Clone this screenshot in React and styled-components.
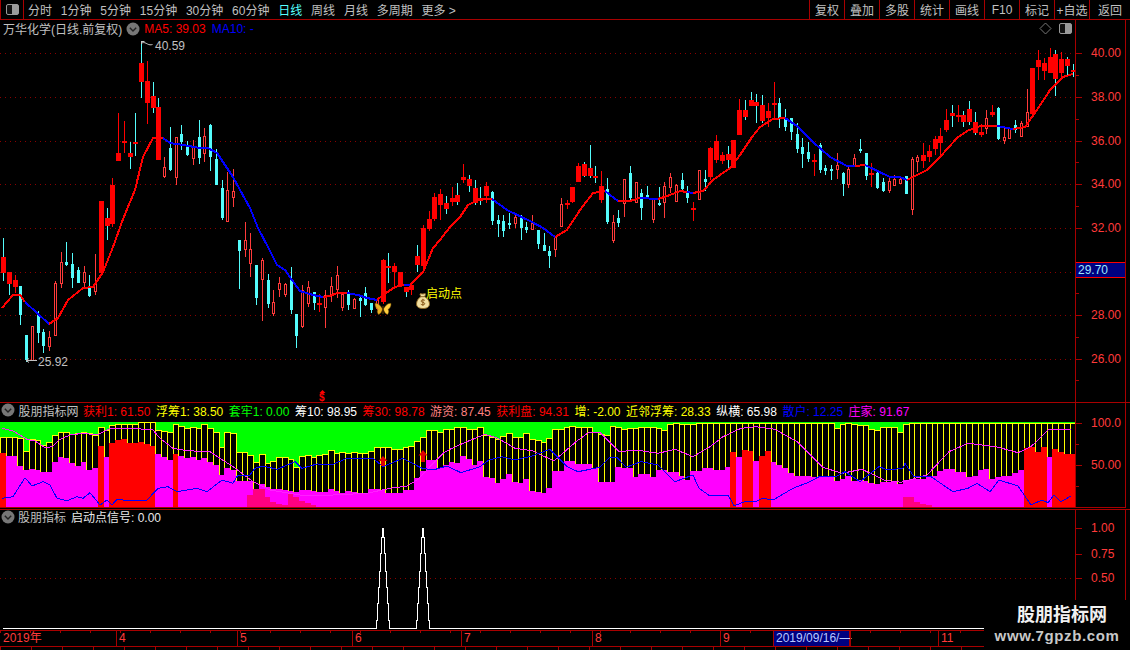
import React from "react";
import styled, { createGlobalStyle } from "styled-components";

const BORDER = "#a80000";
const FONT = `"Liberation Sans", "Noto Sans CJK SC", sans-serif`;

const GlobalStyle = createGlobalStyle`
  html, body { margin: 0; padding: 0; background: #000; }
`;

// type, body top, body bottom, wick top, wick bottom (page pixels)
// r = red, h = hollow red, c = cyan, m = red body with cyan wick
const candles = [
  ["m",257,273,238,281],["m",272,284,272,295],["r",280,287,275,293],["c",286,315,286,325],["c",335,360,335,362],
  ["h",326,360,326,360],["c",314,333,311,343],["c",332,346,329,353],["h",337,346,331,351],["h",283,335,281,335],
  ["h",262,283,252,288],["c",262,265,242,266],["c",264,278,253,288],["c",270,283,267,283],["h",272,282,266,287],
  ["c",288,296,275,297],["h",283,291,254,295],["r",201,273,201,276],["m",218,226,208,240],["r",185,224,178,227],
  ["r",153,161,113,161],["r",141,143,121,153],["m",153,157,142,169],["m",142,144,113,156],["m",63,82,41,98],
  ["r",81,103,61,124],["m",96,108,82,113],["m",107,160,98,160],["h",167,176,157,178],["c",148,170,127,171],
  ["h",137,177,137,185],["c",134,142,125,150],["c",146,155,141,156],["h",147,158,140,165],["c",137,158,120,164],
  ["h",136,153,128,162],["c",125,157,124,171],["c",159,185,149,185],["c",188,218,180,220],["h",190,221,172,221],
  ["h",191,197,169,207],["c",240,251,240,289],["h",240,249,222,257],["h",249,263,233,277],["c",265,298,265,305],
  ["h",260,279,258,321],["c",280,304,274,308],["h",302,313,290,316],["h",283,289,277,297],["h",284,294,283,297],
  ["c",279,310,267,314],["c",314,336,314,348],["h",290,326,285,328],["h",287,303,281,307],["c",292,303,292,310],
  ["r",303,305,294,312],["h",295,307,290,328],["h",286,295,277,302],["h",275,289,266,298],["h",294,307,292,311],
  ["c",294,305,290,310],["h",299,308,298,309],["c",298,301,297,317],["c",293,305,287,306],["c",303,310,303,313],
  ["h",300,308,298,310],["r",260,302,259,304],["m",266,268,253,283],["r",266,272,263,288],["r",272,285,272,287],
  ["m",287,292,287,297],["r",285,290,285,295],["m",256,265,245,272],["r",228,266,225,268],["r",219,229,211,231],
  ["r",197,219,193,221],["r",194,205,189,220],["m",203,209,196,214],["r",198,202,187,206],["m",195,202,183,205],
  ["r",177,180,164,183],["m",179,186,175,192],["m",188,203,180,205],["m",198,201,187,205],["r",186,196,182,203],
  ["c",192,221,191,225],["c",220,224,215,237],["c",221,231,215,237],["c",223,225,213,229],["h",217,223,213,228],
  ["c",217,228,215,240],["c",227,230,222,233],["h",223,229,215,230],["c",230,244,230,249],["c",245,251,233,251],
  ["c",251,256,246,268],["h",236,249,236,257],["h",204,226,198,226],["r",203,205,200,209],["r",187,202,187,203],
  ["r",166,182,163,182],["m",164,176,162,177],["m",168,176,145,178],["m",176,178,166,183],["r",186,200,171,203],
  ["c",189,222,178,224],["h",222,240,215,243],["c",218,223,210,227],["h",179,203,179,217],["c",173,198,166,200],
  ["h",182,202,182,203],["c",193,208,189,220],["c",195,199,186,199],["h",199,219,199,223],["c",203,205,187,206],
  ["h",186,202,182,218],["h",177,187,173,193],["h",185,201,184,201],["c",180,189,173,192],["c",192,198,186,203],
  ["r",208,209,202,221],["h",170,199,170,200],["c",179,182,170,191],["r",148,177,147,180],["r",141,160,135,163],
  ["r",155,161,152,164],["m",154,160,146,168],["r",140,168,140,168],["r",110,135,99,135],["m",110,117,100,120],
  ["m",100,106,92,106],["m",102,106,94,123],["m",105,121,95,123],["r",111,118,103,127],["r",103,105,82,118],
  ["c",103,118,98,128],["c",119,127,109,131],["c",118,132,118,140],["c",134,149,123,153],["c",147,154,138,168],
  ["c",152,159,142,162],["r",160,162,154,176],["c",145,170,143,173],["c",168,171,165,175],["c",169,171,165,180],
  ["h",165,169,153,179],["c",173,184,172,196],["h",169,184,167,188],["h",158,165,154,167],["c",149,150,139,153],
  ["c",153,176,153,180],["r",173,175,163,187],["c",173,188,172,189],["c",182,191,178,192],["h",181,190,177,193],
  ["h",179,185,175,186],["h",179,183,176,184],["c",176,194,176,194],["h",159,209,157,215],["h",157,161,155,172],
  ["r",155,161,143,168],["r",151,157,145,162],["r",139,149,136,155],["r",136,143,128,155],["r",120,130,109,132],
  ["m",113,116,105,127],["r",115,117,105,122],["m",115,122,111,127],["m",109,122,101,125],["m",122,133,112,135],
  ["r",132,135,124,137],["h",118,128,110,134],["r",112,115,105,117],["c",108,139,107,140],["h",137,140,128,144],
  ["h",128,138,127,139],["c",125,130,120,133],["h",123,136,121,137],["h",112,126,89,126],["r",68,114,68,115],
  ["r",60,67,50,80],["r",63,71,58,80],["r",57,73,48,73],["m",54,79,50,96],["r",59,73,52,78],["m",59,66,57,77],
  ["m",70,72,64,77],
];

// red/blue trend line of the price pane
const maSegments = [
  ["#ff0000", [[2,308],[7,302],[13,295],[20,295],[25,302]]],
  ["#0000ff", [[25,302],[37,313],[49,324]]],
  ["#ff0000", [[49,324],[58,318],[68,300],[83,288],[93,287],[103,272],[113,247],[123,219],[135,190],[143,157],[153,138],[163,138]]],
  ["#0000ff", [[163,138],[170,143],[183,145],[200,148],[208,148],[217,153],[233,177],[240,190],[250,208],[258,228],[268,247],[277,265],[285,270],[292,280],[300,291],[313,295],[323,297]]],
  ["#ff0000", [[323,297],[330,296],[337,293],[347,293]]],
  ["#0000ff", [[347,293],[358,295],[367,298],[377,300]]],
  ["#ff0000", [[377,300],[383,295],[395,287],[404,285]]],
  ["#0000ff", [[404,285],[410,285]]],
  ["#ff0000", [[410,285],[423,272],[433,248],[440,240],[450,227],[460,217],[468,205],[480,199],[492,199]]],
  ["#0000ff", [[492,199],[507,210],[532,222],[543,228],[555,237]]],
  ["#ff0000", [[555,237],[567,230],[580,210],[593,193],[605,191]]],
  ["#0000ff", [[605,191],[618,201]]],
  ["#ff0000", [[618,201],[630,201],[640,198]]],
  ["#0000ff", [[640,198],[658,199]]],
  ["#ff0000", [[658,199],[670,195],[680,191],[687,192]]],
  ["#0000ff", [[687,192],[693,193]]],
  ["#ff0000", [[693,193],[703,191],[713,180],[730,168],[740,155],[752,137],[760,127],[773,119],[785,118]]],
  ["#0000ff", [[785,118],[797,126],[813,142],[830,157],[847,166],[855,166]]],
  ["#ff0000", [[855,166],[865,165]]],
  ["#0000ff", [[865,165],[890,177],[900,177],[907,180]]],
  ["#ff0000", [[907,180],[927,170],[940,157],[957,138],[967,131],[980,126],[997,126]]],
  ["#0000ff", [[997,126],[1013,129]]],
  ["#ff0000", [[1013,129],[1025,127],[1037,110],[1050,90],[1063,77],[1073,74]]],
];

const gridY = [53, 97, 141, 184, 228, 272, 315, 359];

// bar tops and magenta tops read off at 3x, converted with toY below
const barTop = [
  170,170,170,175,213,178,181,195,185,165,157,157,162,160,157,160,165,142,150,135,
  133,133,133,133,127,127,127,150,152,156,133,137,145,140,145,133,145,155,200,157,
  160,217,217,225,247,222,248,242,230,230,238,262,228,225,230,226,223,211,220,217,
  218,217,220,219,214,200,200,202,208,208,202,197,182,170,150,150,157,147,148,142,
  142,148,148,142,165,172,178,168,160,172,170,160,178,180,185,175,148,148,142,137,
  140,140,140,155,162,165,138,140,148,143,143,140,140,140,143,150,132,130,133,133,
  133,130,130,128,128,128,128,128,128,128,128,128,128,128,128,128,128,128,128,128,
  128,128,128,128,128,145,132,130,133,135,135,148,150,140,140,140,155,133,128,128,
  128,128,128,128,128,128,128,128,128,128,128,128,128,128,128,128,128,128,128,128,
  128,128,128,128,128,128,128,
];
const barMid = [
  218,228,228,258,270,267,270,275,275,245,232,234,250,258,245,270,264,198,232,190,
  180,177,190,188,186,192,198,222,230,240,222,227,233,231,240,233,245,255,285,264,
  270,303,303,303,328,312,322,326,326,330,333,337,330,330,332,336,335,327,332,338,
  332,336,341,342,328,327,330,338,338,338,330,330,293,273,240,240,264,256,245,248,
  228,237,255,243,291,295,310,297,282,305,310,297,333,335,338,323,272,272,243,243,
  252,252,252,265,305,305,305,262,265,265,290,283,283,290,270,270,275,275,287,300,
  272,272,265,265,270,270,260,215,230,210,212,243,228,213,245,255,265,280,288,288,
  288,290,290,290,290,302,297,287,302,300,303,310,312,305,305,305,312,300,296,296,
  296,287,287,272,267,267,277,277,290,288,270,268,297,290,288,288,278,270,205,202,
  215,202,230,207,215,222,222,
];
const redBars = new Set([0,17,19,20,21,22,23,24,25,26,30,127,129,130,132,133,178,179,180,181,183,184,185,186]);
const pinkBars = { 43:345,44:328,45:328,46:352,47:365,48:372,49:375,50:342,51:350,52:362,53:370,54:376,157:352,158:352,159:365,160:372,161:375 };

const purpleLine = [
  [2,145],[13,153],[27,178],[35,183],[45,203],[52,200],[60,178],[70,165],[83,160],[97,165],[110,145],[133,145],[153,150],[160,175],
  [173,205],[187,212],[210,215],[220,235],[233,260],[253,305],[270,330],[300,345],[333,345],[367,340],[390,325],[407,318],[417,300],
  [430,260],[443,220],[450,208],[463,190],[485,163],[498,175],[515,205],[532,212],[554,243],[576,185],[589,157],[600,158],[619,215],
  [636,210],[658,220],[675,208],[693,230],[710,200],[723,170],[741,145],[756,140],[775,148],[797,185],[823,262],[842,280],[862,268],
  [884,300],[901,307],[927,285],[949,215],[968,190],[996,200],[1018,218],[1031,200],[1048,150],[1071,148],
];
const blueLine = [
  [2,355],[13,350],[25,293],[32,318],[43,305],[50,315],[57,355],[67,362],[77,350],[83,355],[90,338],[100,375],[107,360],[112,375],
  [117,358],[128,362],[147,360],[158,325],[168,320],[177,335],[197,325],[207,335],[222,300],[233,310],[238,285],[250,285],[255,265],
  [263,258],[277,268],[295,245],[302,265],[317,252],[333,253],[347,235],[373,235],[383,260],[403,235],[422,265],[433,270],[447,258],
  [461,278],[480,260],[489,240],[502,230],[515,240],[532,228],[550,208],[567,260],[578,275],[600,262],[610,232],[617,232],[626,262],
  [641,245],[658,255],[675,305],[693,285],[699,325],[710,348],[728,345],[734,377],[745,365],[756,365],[762,355],[773,360],[793,325],
  [810,305],[819,290],[836,290],[845,275],[860,305],[879,260],[888,270],[903,265],[905,250],[914,290],[931,290],[953,335],[968,325],
  [977,310],[990,335],[999,300],[1018,318],[1031,375],[1042,360],[1048,368],[1054,345],[1061,365],[1071,348],
];

const toolbarItems = [
  ["分时"],["1分钟"],["5分钟"],["15分钟"],["30分钟"],["60分钟"],["日线", true],["周线"],["月线"],["多周期"],["更多 >"],
];
const toolButtons = ["复权", "叠加", "多股", "统计", "画线", "F10", "标记", "+自选", "返回"];

const indicatorLegend = [
  ["获利1: 61.50", "#ff0000"],
  ["浮筹1: 38.50", "#ffff00"],
  ["套牢1: 0.00", "#00ff00"],
  ["筹10: 98.95", "#ffffff"],
  ["筹30: 98.78", "#ff0000"],
  ["游资: 87.45", "#ff8080"],
  ["获利盘: 94.31", "#ff0000"],
  ["增: -2.00", "#ffff00"],
  ["近邻浮筹: 28.33", "#ffff00"],
  ["纵横: 65.98", "#ffffff"],
  ["散户: 12.25", "#0000ff"],
  ["庄家: 91.67", "#ff00ff"],
];

const dateCells = [
  [116, "2019年"],[121, "4"],[115, "5"],[109, "6"],[131, "7"],[128, "8"],[53, "9"],[77, "2019/09/16/—", true],[88, ""],[47, "11"],
];

const Screen = styled.div`
  position: relative;
  width: 1130px;
  height: 650px;
  overflow: hidden;
  background: #000;
  font-family: ${FONT};
  font-size: 12px;
  color: #c0c0c0;
  display: flex;
  flex-direction: column;
`;

const Toolbar = styled.div`
  height: 20px;
  box-sizing: border-box;
  border-bottom: 1px solid ${BORDER};
  display: flex;
  align-items: stretch;
`;

const ToggleCell = styled.div`
  width: 24px;
  box-sizing: border-box;
  border-right: 1px solid ${BORDER};
  border-left: 1px solid ${BORDER};
  display: flex;
  align-items: center;
  justify-content: center;
`;

const PeriodList = styled.div`
  display: flex;
  align-items: center;
  gap: 8.8px;
  padding-left: 4px;
`;

const PeriodItem = styled.span`
  color: ${(props) => (props.$active ? "#55ffff" : "#c0c0c0")};
  white-space: nowrap;
`;

const ToolGroup = styled.div`
  margin-left: auto;
  display: flex;
`;

const ToolButton = styled.div`
  width: ${(props) => (props.$last ? "41px" : "35px")};
  box-sizing: border-box;
  border-left: 1px solid ${BORDER};
  display: flex;
  align-items: center;
  justify-content: center;
  white-space: nowrap;
  color: #c0c0c0;
`;

const Pane = styled.section`
  height: ${(props) => props.$height}px;
  box-sizing: border-box;
  display: flex;
  flex: none;
  margin-top: ${(props) => props.$gap || 0}px;
  border-top: ${(props) => (props.$ruled ? `1px solid ${BORDER}` : "none")};
`;

const PlotColumn = styled.div`
  width: 1075px;
  display: flex;
  flex-direction: column;
`;

const Legend = styled.div`
  height: ${(props) => props.$height}px;
  box-sizing: border-box;
  flex: none;
  display: flex;
  align-items: center;
  gap: ${(props) => props.$gap}px;
  padding-left: ${(props) => props.$inset}px;
  padding-bottom: ${(props) => props.$lift || 0}px;
  white-space: nowrap;
`;

const LegendText = styled.span`
  color: ${(props) => props.$color || "#c0c0c0"};
`;

const LegendTools = styled.div`
  margin-left: auto;
  display: flex;
  align-items: center;
  gap: 7px;
  padding-right: 3px;
`;

const Chart = styled.svg`
  display: block;
  flex: none;
  background: #000;
`;

const ChartNote = styled.text`
  font-family: ${FONT};
  font-size: 12px;
  fill: ${(props) => props.$fill};
`;

const AxisColumn = styled.div`
  position: relative;
  width: 51px;
  flex: none;
  box-sizing: border-box;
  border-left: 1px solid ${BORDER};
  border-right: 1px solid ${BORDER};
  border-bottom: ${(props) => (props.$ruled ? `1px solid ${BORDER}` : "none")};
`;

const AxisLabel = styled.div`
  position: absolute;
  left: 0;
  right: 0;
  top: ${(props) => props.$y}px;
  height: 14px;
  margin-top: -7px;
  line-height: 14px;
  padding-left: 15px;
  color: #ff3a3a;
  &::before {
    content: "";
    position: absolute;
    left: 0;
    top: 7px;
    width: 6px;
    height: 1px;
    background: ${BORDER};
  }
`;

const AxisTick = styled.div`
  position: absolute;
  left: 0;
  top: ${(props) => props.$y}px;
  width: 3px;
  height: 1px;
  background: ${BORDER};
`;

const PriceTag = styled.div`
  position: absolute;
  left: 0;
  right: 0;
  top: ${(props) => props.$y}px;
  height: 16px;
  box-sizing: border-box;
  border-top: 1px solid #ff0000;
  border-bottom: 1px solid #ff0000;
  background: #000080;
  color: #9fe8ff;
  padding-left: 2px;
  line-height: 14px;
`;

const BottomRule = styled.div`
  height: 1px;
  flex: none;
  background: ${BORDER};
`;

const DateAxis = styled.div`
  height: 17px;
  flex: none;
  box-sizing: border-box;
  display: flex;
  border-top: 1px solid ${BORDER};
  border-bottom: 1px solid ${BORDER};
  background-image: repeating-linear-gradient(to right, ${BORDER} 0 1px, transparent 1px 30px);
  background-size: 100% 2px;
  background-repeat: no-repeat;
`;

const DateCell = styled.div`
  width: ${(props) => props.$width}px;
  flex: none;
  box-sizing: border-box;
  border-left: ${(props) => (props.$first ? "none" : `1px solid ${BORDER}`)};
  border-right: ${(props) => (props.$active ? `1px solid ${BORDER}` : "none")};
  background: ${(props) => (props.$active ? "#000080" : "transparent")};
  color: ${(props) => (props.$active ? "#b8c8ff" : "#ff3a3a")};
  padding-left: ${(props) => (props.$first ? 3 : 2)}px;
  line-height: 15px;
  white-space: nowrap;
`;

const FootStrip = styled.div`
  flex: 1;
  background-image: repeating-linear-gradient(to right, ${BORDER} 0 1px, transparent 1px 31px);
`;

const Watermark = styled.div`
  position: absolute;
  right: 0;
  bottom: 0;
  width: 146px;
  height: 50px;
  box-sizing: border-box;
  padding-bottom: 4px;
  background: #000;
  display: flex;
  flex-direction: column;
  align-items: center;
  justify-content: center;
  gap: 1px;
`;

const WatermarkName = styled.div`
  font-size: 18px;
  line-height: 24px;
  font-weight: 700;
  color: #f0f0f0;
  margin-left: 10px;
`;

const WatermarkUrl = styled.div`
  font-size: 15px;
  line-height: 16px;
  font-weight: 700;
  letter-spacing: 0.6px;
  color: #c8c8c8;
`;

const candleX = (i) => Math.round(3 + 5.75 * i);
const toY = (v) => 380 + v / 3;
const pointsOf = (pts) => pts.map((p) => p.join(",")).join(" ");
const zoomPoints = (pts) => pts.map(([x, v]) => `${x},${toY(v).toFixed(1)}`).join(" ");

const ChevronBadge = () => (
  <svg width="14" height="14" viewBox="0 0 14 14">
    <circle cx="7" cy="7" r="6.5" fill="#777" />
    <path d="M3.8 5.8 7 9l3.2-3.2" fill="none" stroke="#222" strokeWidth="1.4" />
  </svg>
);

const SplitBox = ({ width = 13, height = 11 }) => (
  <svg width={width} height={height} viewBox="0 0 13 11">
    <rect x="0.5" y="0.5" width="12" height="10" rx="1.5" fill="#111" stroke="#9a9a9a" />
    <rect x="6" y="1" width="6" height="9" fill="#9a9a9a" />
  </svg>
);

const Diamond = () => (
  <svg width="13" height="13" viewBox="0 0 13 13">
    <path d="M6.5 1 12 6.5 6.5 12 1 6.5Z" fill="none" stroke="#777" />
  </svg>
);

const Candle = ({ data, index }) => {
  const [type, top, bottom, wickTop, wickBottom] = data;
  const x = candleX(index);
  const wickColor = type === "c" || type === "m" ? "#54fcfc" : type === "h" ? "#ff3a3a" : "#ff0000";
  if (type === "h") {
    return (
      <g>
        <line x1={x + 0.5} x2={x + 0.5} y1={wickTop} y2={wickBottom} stroke={wickColor} />
        <rect x={x - 0.5} y={top + 0.5} width="2" height={bottom - top} fill="#000" stroke="#ff3a3a" />
      </g>
    );
  }
  const bodyWidth = type === "c" ? 3 : 5;
  const bodyColor = type === "c" ? "#54fcfc" : "#ff0000";
  return (
    <g>
      <line x1={x + 0.5} x2={x + 0.5} y1={wickTop} y2={wickBottom} stroke={wickColor} />
      <rect x={x + 0.5 - bodyWidth / 2} y={top} width={bodyWidth} height={Math.max(bottom - top, 2)} fill={bodyColor} />
    </g>
  );
};

const Butterfly = () => (
  <g transform="translate(375 303)">
    <path d="M7.5 6C5 1.5 2.5 0 0 .5c0 3 1.2 5 3 6-1 1-1 3 .5 5C5.5 11 7 8.5 7.5 6Z" fill="#e8b020" stroke="#8a5a00" strokeWidth=".5" />
    <path d="M8.5 6C11 1.5 13.5 0 16 .5c0 3-1.2 5-3 6 1 1 1 3-.5 5C10.5 11 9 8.5 8.5 6Z" fill="#ffd040" stroke="#8a5a00" strokeWidth=".5" />
    <path d="M8 3v8" stroke="#5a3a00" strokeWidth="1.2" />
  </g>
);

const MoneyBag = () => (
  <g transform="translate(416 293)">
    <path d="M5 3.5C4 2 3.6 1 4.5.5c1.2.6 3.2.6 4.6 0 .9.5.5 1.5-.6 3 3 1.6 5 4.6 5 7.4 0 3-2.600 4.600-6.500 4.600S.5 13.900.5 10.900C.5 8.100 2.300 5.100 5 3.500Z" fill="#f2dfa0" stroke="#8a6420" />
    <path d="M4.800 3.700h4" stroke="#8a6420" />
    <path d="M8.800 7.400C8.200 6.600 5.200 6.600 5 8c-.2 1.600 3.900 1 3.800 2.800-.1 1.300-3.100 1.300-4 .4M6.900 5.800v7" fill="none" stroke="#8a5a1a" />
  </g>
);

const PriceChart = () => (
  <Chart width="1075" height="364" viewBox="0 38 1075 364">
    {gridY.map((y) => (
      <line key={y} x1="0" x2="1075" y1={y + 0.5} y2={y + 0.5} stroke="#8a0000" strokeDasharray="1 4" shapeRendering="crispEdges" />
    ))}
    <g shapeRendering="crispEdges">
      {candles.map((c, i) => (
        <Candle key={i} data={c} index={i} />
      ))}
    </g>
    {maSegments.map(([color, pts], i) => (
      <polyline key={i} points={pointsOf(pts)} fill="none" stroke={color} strokeWidth="2" strokeLinejoin="round" shapeRendering="crispEdges" />
    ))}
    <path d="M141.500 41v3M141.500 41.500h3M141.500 43c3-1 4 0 6 1s3 1 5 .5" fill="none" stroke="#c8c8c8" />
    <ChartNote x="155" y="50" $fill="#c0c0c0">40.59</ChartNote>
    <path d="M26 360.500h11M26 360.500l3-2M26 360.500l3 2" fill="none" stroke="#c0c0c0" />
    <ChartNote x="38" y="366" $fill="#c0c0c0">25.92</ChartNote>
    <Butterfly />
    <MoneyBag />
    <ChartNote x="426" y="298" $fill="#ffff00">启动点</ChartNote>
    <path d="M322.500 390l3 3h-6Z" fill="#ff0000" />
    <ChartNote x="319" y="401" $fill="#ff0000" style={{ fontWeight: 700, fontSize: 10 }}>$</ChartNote>
  </Chart>
);

const BandChart = () => (
  <Chart width="1075" height="85" viewBox="0 422 1075 85">
    <rect x="0" y="422" width="1075" height="85" fill="#00ff00" />
    <g shapeRendering="crispEdges">
      {barTop.map((top, i) => {
        const x = Math.round(5.75 * i);
        const next = Math.min(Math.round(5.75 * (i + 1)), 1075);
        const y1 = Math.round(toY(top));
        const y2 = Math.round(toY(barMid[i]));
        return (
          <g key={i}>
            <rect x={x + 0.5} y={y1 + 0.5} width={next - x} height={y2 - y1} fill="#000" stroke="#ffff00" />
            <rect x={x} y={y2} width={next - x} height={507 - y2} fill={redBars.has(i) ? "#ff0000" : "#ff00ff"} />
            {pinkBars[i] && (
              <rect x={x} y={Math.round(toY(pinkBars[i]))} width={next - x} height={507 - Math.round(toY(pinkBars[i]))} fill="#ff0080" />
            )}
          </g>
        );
      })}
    </g>
    <polyline points={zoomPoints(purpleLine)} fill="none" stroke="#ff20ff" shapeRendering="crispEdges" />
    <polyline points={zoomPoints(blueLine)} fill="none" stroke="#0000ff" shapeRendering="crispEdges" />
    <path d="M383 456l4.500 5H385v5h-4v-5h-2.500Z" fill="#e00000" />
    <path d="M423 450l4.500 5.500H425V462h-4v-6.500h-2.500Z" fill="#e00000" />
  </Chart>
);

const spike = (c) =>
  [
    [c - 6, 628], [c - 6, 620], [c - 5, 620], [c - 5, 603], [c - 4, 603], [c - 4, 587], [c - 3, 587], [c - 3, 571],
    [c - 2, 571], [c - 2, 553], [c - 1, 553], [c - 1, 537], [c, 537], [c, 528], [c + 1, 528], [c + 1, 537], [c + 2, 537],
    [c + 2, 553], [c + 3, 553], [c + 3, 571], [c + 4, 571], [c + 4, 587], [c + 5, 587], [c + 5, 603], [c + 6, 603],
    [c + 6, 620], [c + 7, 620], [c + 7, 628],
  ];

const SignalChart = () => (
  <Chart width="1075" height="104" viewBox="0 526 1075 104">
    <line x1="0" x2="1075" y1="578.500" y2="578.500" stroke="#8a0000" strokeDasharray="1 4" shapeRendering="crispEdges" />
    <polyline
      points={pointsOf([[2, 628], ...spike(382), ...spike(422), [1075, 628]].map(([x, y]) => [x + 0.5, y + 0.5]))}
      fill="none"
      stroke="#fff"
      shapeRendering="crispEdges"
    />
  </Chart>
);

const App = () => {
  return (
    <Screen>
      <GlobalStyle />
      <Toolbar>
        <ToggleCell>
          <SplitBox />
        </ToggleCell>
        <PeriodList>
          {toolbarItems.map(([label, active]) => (
            <PeriodItem key={label} $active={active}>{label}</PeriodItem>
          ))}
        </PeriodList>
        <ToolGroup>
          {toolButtons.map((label, i) => (
            <ToolButton key={label} $last={i === toolButtons.length - 1}>{label}</ToolButton>
          ))}
        </ToolGroup>
      </Toolbar>

      <Pane $height={382}>
        <PlotColumn>
          <Legend $height={18} $gap={4} $inset={3} $lift={1}>
            <LegendText>万华化学(日线.前复权)</LegendText>
            <ChevronBadge />
            <LegendText $color="#ff0000">MA5: 39.03</LegendText>
            <LegendText $color="#0000ff" style={{ marginLeft: 2 }}>MA10: -</LegendText>
            <LegendTools>
              <Diamond />
              <SplitBox />
            </LegendTools>
          </Legend>
          <PriceChart />
        </PlotColumn>
        <AxisColumn>
          {[["40.00", 33], ["38.00", 77], ["36.00", 121], ["34.00", 164], ["32.00", 208], ["28.00", 295], ["26.00", 339]].map(([v, y]) => (
            <AxisLabel key={v} $y={y}>{v}</AxisLabel>
          ))}
          {[55, 99, 142, 186, 273, 317, 360].map((y) => (
            <AxisTick key={y} $y={y} />
          ))}
          <PriceTag $y={242}>29.70</PriceTag>
        </AxisColumn>
      </Pane>

      <Pane $height={106} $ruled>
        <PlotColumn>
          <Legend $height={19} $gap={5.5} $inset={1} $lift={5}>
            <ChevronBadge />
            <LegendText style={{ marginLeft: -2, marginRight: -1 }}>股朋指标网</LegendText>
            {indicatorLegend.map(([label, color]) => (
              <LegendText key={label} $color={color}>{label}</LegendText>
            ))}
          </Legend>
          <BandChart />
          <BottomRule />
        </PlotColumn>
        <AxisColumn $ruled>
          <AxisLabel $y={20}>100.0</AxisLabel>
          <AxisLabel $y={62}>50.00</AxisLabel>
          <AxisTick $y={41} />
          <AxisTick $y={83} />
        </AxisColumn>
      </Pane>

      <Pane $height={121} $gap={1} $ruled>
        <PlotColumn>
          <Legend $height={16} $gap={4} $inset={1} $lift={3}>
            <ChevronBadge />
            <LegendText style={{ marginLeft: -1 }}>股朋指标</LegendText>
            <LegendText $color="#e8e8e8" style={{ marginLeft: 1 }}>启动点信号: 0.00</LegendText>
          </Legend>
          <SignalChart />
        </PlotColumn>
        <AxisColumn>
          <AxisLabel $y={18}>1.00</AxisLabel>
          <AxisLabel $y={44}>0.75</AxisLabel>
          <AxisLabel $y={68}>0.50</AxisLabel>
        </AxisColumn>
      </Pane>

      <DateAxis>
        {dateCells.map(([width, label, active], i) => (
          <DateCell key={i} $width={width} $first={i === 0} $active={active}>{label}</DateCell>
        ))}
      </DateAxis>
      <FootStrip />

      <Watermark>
        <WatermarkName>股朋指标网</WatermarkName>
        <WatermarkUrl>www.7gpzb.com</WatermarkUrl>
      </Watermark>
    </Screen>
  );
};

export default App;
